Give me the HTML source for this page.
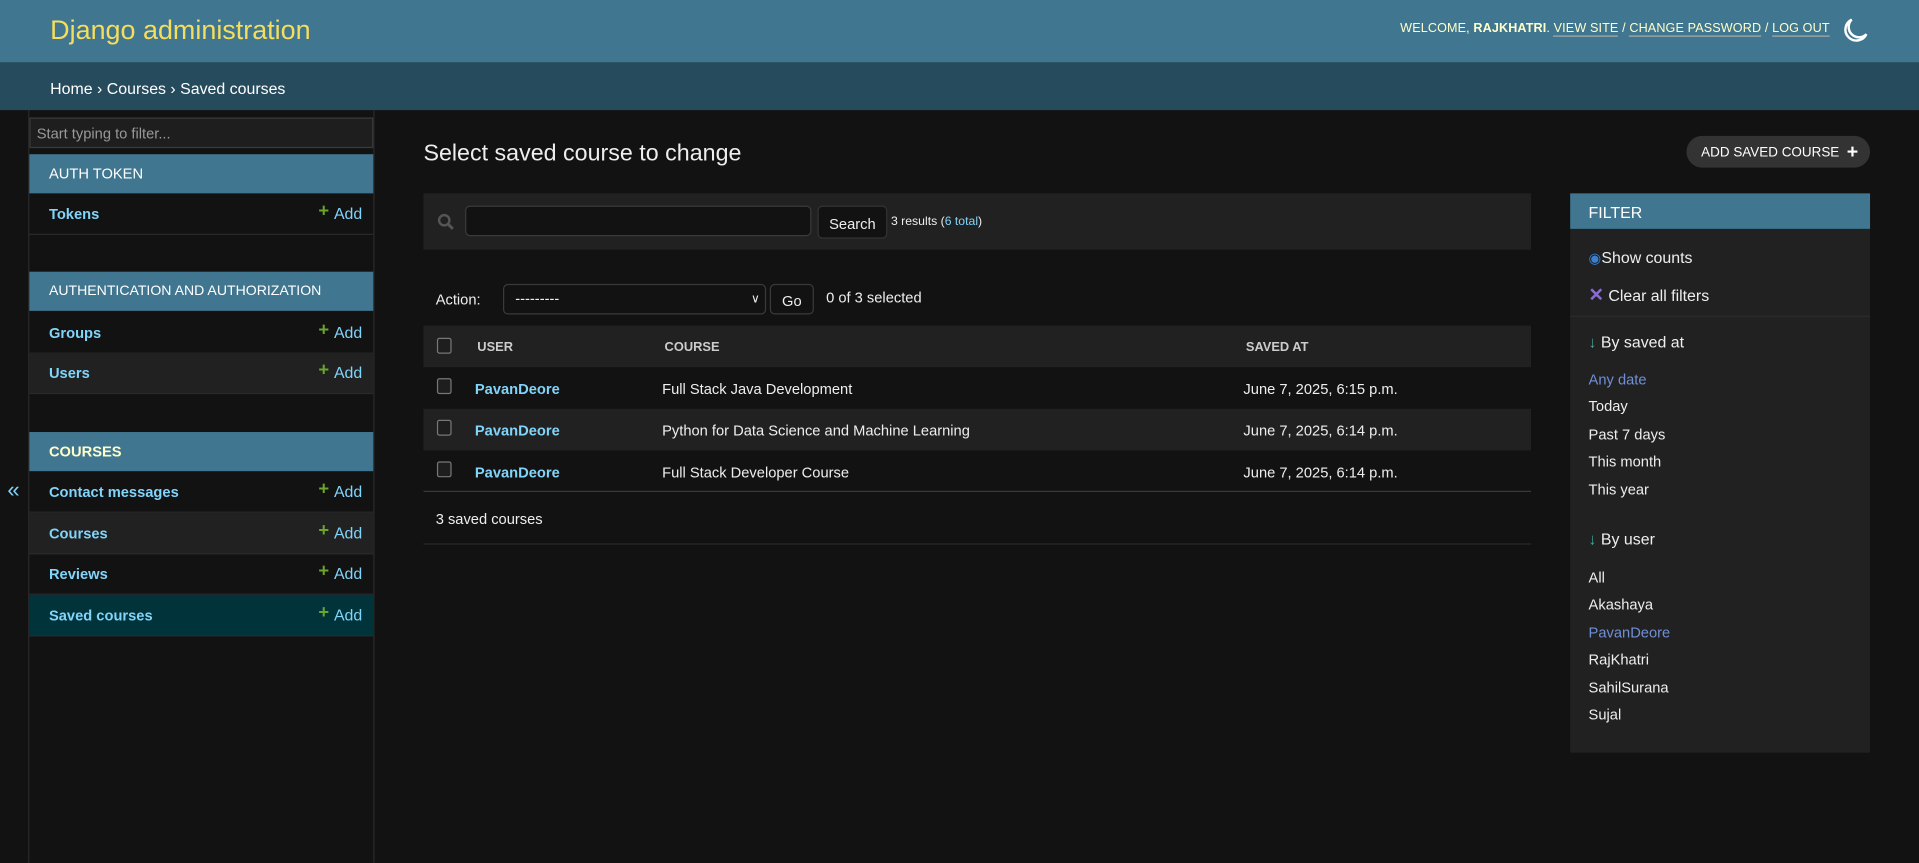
<!DOCTYPE html>
<html><head><meta charset="utf-8"><style>
html,body{margin:0;padding:0;background:#121212;overflow:hidden;width:1919px;height:863px}
#w{position:absolute;left:0;top:0;width:1568px;height:705px;transform:scale(1.22385);transform-origin:0 0;font-family:"Liberation Sans",sans-serif;color:#eee;font-size:12px}
.a{position:absolute;white-space:nowrap}
a{color:#81d4fa;text-decoration:none}
.hdr{left:0;top:0;width:1568px;height:51px;background:#417690}
.bc{left:0;top:51px;width:1568px;height:39px;background:#264b5d}
.cap{position:absolute;left:24px;width:281px;height:32px;background:#417690;color:#fff;font-size:12px;line-height:32px;text-indent:16px}
.row{position:absolute;left:24px;width:281px;height:33px;border-bottom:1px solid #2a2a2a;line-height:34px;font-size:12px}
.row b{position:absolute;left:16px;color:#81d4fa}
.row span{position:absolute;right:9px;color:#81d4fa;font-size:13px}
.row span i{font-style:normal;color:#6ca52e;font-weight:bold;font-size:15px;margin-right:4px;position:relative;top:-2px}
.cb{position:absolute;width:10px;height:11px;border:1px solid #777;border-radius:2px;background:#1e1e1e}
.tr{position:absolute;left:346px;width:905px;height:34px;line-height:36px;font-size:12px}
.tr a{position:absolute;left:42px;font-weight:bold}
.tr .c{position:absolute;left:195px}
.tr .d{position:absolute;left:670px}
.f{position:absolute;left:1298px;font-size:12px}
</style></head><body><div id="w">
<div class="a hdr"></div>
<div class="a" style="left:41px;top:12px;font-size:22px;color:#f5dd5d;font-weight:300">Django administration</div>
<div class="a" style="right:73px;top:18px;font-size:10.3px;color:#ffc;letter-spacing:0.1px">WELCOME, <b>RAJKHATRI</b>. <span style="border-bottom:1px solid #aaa">VIEW SITE</span> / <span style="border-bottom:1px solid #aaa">CHANGE PASSWORD</span> / <span style="border-bottom:1px solid #aaa">LOG OUT</span></div>
<svg class="a" style="left:1504px;top:13px" width="24" height="24" viewBox="0 0 24 24"><path d="M9 3a9 9 0 1 0 12 12A8 8 0 0 1 9 3z" fill="none" stroke="#fff" stroke-width="2"/></svg>
<div class="a bc"></div>
<div class="a" style="left:41px;top:65px;font-size:13px;color:#fff">Home › Courses › Saved courses</div>
<div class="a" style="left:23px;top:90px;width:1px;height:615px;background:#2a2a2a"></div>
<div class="a" style="left:305px;top:90px;width:1px;height:615px;background:#2a2a2a"></div>
<div class="a" style="left:6px;top:390px;color:#81d4fa;font-size:18px">«</div>
<div class="a" style="left:24px;top:96px;width:279px;height:23px;border:1px solid #3a3a3a;background:#1e1e1e;color:#999;font-size:12px;line-height:24px;text-indent:5px">Start typing to filter...</div>
<div class="cap" style="top:126px">AUTH TOKEN</div>
<div class="row" style="top:158px"><b>Tokens</b><span><i>+</i>Add</span></div>
<div class="cap" style="top:222px;font-size:11.5px">AUTHENTICATION AND AUTHORIZATION</div>
<div class="row" style="top:255px"><b>Groups</b><span><i>+</i>Add</span></div>
<div class="row" style="top:288px;background:#212121"><b>Users</b><span><i>+</i>Add</span></div>
<div class="cap" style="top:353px;font-weight:bold;color:#ffffcc">COURSES</div>
<div class="row" style="top:385px"><b>Contact messages</b><span><i>+</i>Add</span></div>
<div class="row" style="top:419px;background:#212121"><b>Courses</b><span><i>+</i>Add</span></div>
<div class="row" style="top:452px"><b>Reviews</b><span><i>+</i>Add</span></div>
<div class="row" style="top:486px;background:#00333a"><b>Saved courses</b><span><i>+</i>Add</span></div>

<div class="a" style="left:346px;top:115px;font-size:19px;font-weight:300">Select saved course to change</div>
<div class="a" style="left:1378px;top:111px;width:150px;height:26px;border-radius:13px;background:#333;color:#fff;font-size:11px;line-height:26px;text-indent:12px">ADD SAVED COURSE <b style="font-size:16px;position:relative;top:1px;left:3px">+</b></div>

<div class="a" style="left:346px;top:158px;width:905px;height:46px;background:#212121"></div>
<svg class="a" style="left:357px;top:174px" width="14" height="14" viewBox="0 0 14 14"><circle cx="6" cy="6" r="4.2" fill="none" stroke="#555" stroke-width="2"/><path d="M9 9l4 4" stroke="#555" stroke-width="2.4"/></svg>
<div class="a" style="left:380px;top:168px;width:281px;height:23px;border:1px solid #3a3a3a;border-radius:4px;background:#121212"></div>
<div class="a" style="left:668px;top:168px;width:55px;height:25px;border:1px solid #333;border-radius:4px;background:#121212;font-size:12px;line-height:28px;text-align:center">Search</div>
<div class="a" style="left:728px;top:176px;font-size:10px">3 results (<a>6 total</a>)</div>

<div class="a" style="left:356px;top:238px">Action:</div>
<div class="a" style="left:411px;top:232px;width:213px;height:23px;border:1px solid #3a3a3a;border-radius:4px;background:#121212;line-height:23px;text-indent:9px">---------<span style="position:absolute;right:4px;font-size:10px">&#8744;</span></div>
<div class="a" style="left:629px;top:232px;width:34px;height:23px;border:1px solid #3a3a3a;border-radius:4px;line-height:26px;text-align:center">Go</div>
<div class="a" style="left:675px;top:236px">0 of 3 selected</div>

<div class="tr" style="top:266px;background:#212121;font-size:10.5px;font-weight:bold;color:#ccc"><div class="cb" style="left:11px;top:10px"></div><span style="position:absolute;left:44px">USER</span><span style="position:absolute;left:197px">COURSE</span><span style="position:absolute;left:672px">SAVED AT</span></div>
<div class="tr" style="top:300px"><div class="cb" style="left:11px;top:9px"></div><a>PavanDeore</a><span class="c">Full Stack Java Development</span><span class="d">June 7, 2025, 6:15 p.m.</span></div>
<div class="tr" style="top:334px;background:#212121"><div class="cb" style="left:11px;top:9px"></div><a>PavanDeore</a><span class="c">Python for Data Science and Machine Learning</span><span class="d">June 7, 2025, 6:14 p.m.</span></div>
<div class="tr" style="top:368px"><div class="cb" style="left:11px;top:9px"></div><a>PavanDeore</a><span class="c">Full Stack Developer Course</span><span class="d">June 7, 2025, 6:14 p.m.</span></div>
<div class="a" style="left:346px;top:401px;width:905px;height:1px;background:#3a3a3a"></div>
<div class="a" style="left:356px;top:417px">3 saved courses</div>
<div class="a" style="left:346px;top:444px;width:905px;height:1px;background:#2a2a2a"></div>

<div class="a" style="left:1283px;top:158px;width:245px;height:457px;background:#212121"></div>
<div class="a" style="left:1283px;top:158px;width:245px;height:29px;background:#417690;color:#fff;font-size:13px;line-height:31px;text-indent:15px">FILTER</div>
<div class="f" style="top:203px;font-size:13px"><span style="color:#3a7fd0;font-size:12px">&#9673;</span>Show counts</div>
<div class="f" style="top:232px;font-size:13px"><span style="color:#8a6ad8;font-weight:bold;font-size:15px">✕</span> Clear all filters</div>
<div class="a" style="left:1283px;top:258px;width:245px;height:1px;background:#2b2b2b"></div>
<div class="f" style="top:272px;font-size:13px"><span style="color:#4a9">↓</span> By saved at</div>
<div class="f" style="top:303px;color:#6f8fd6">Any date</div>
<div class="f" style="top:325px">Today</div>
<div class="f" style="top:348px">Past 7 days</div>
<div class="f" style="top:370px">This month</div>
<div class="f" style="top:393px">This year</div>
<div class="f" style="top:433px;font-size:13px"><span style="color:#4a9">↓</span> By user</div>
<div class="f" style="top:465px">All</div>
<div class="f" style="top:487px">Akashaya</div>
<div class="f" style="top:510px;color:#6f8fd6">PavanDeore</div>
<div class="f" style="top:532px">RajKhatri</div>
<div class="f" style="top:555px">SahilSurana</div>
<div class="f" style="top:577px">Sujal</div>
</div></body></html>
